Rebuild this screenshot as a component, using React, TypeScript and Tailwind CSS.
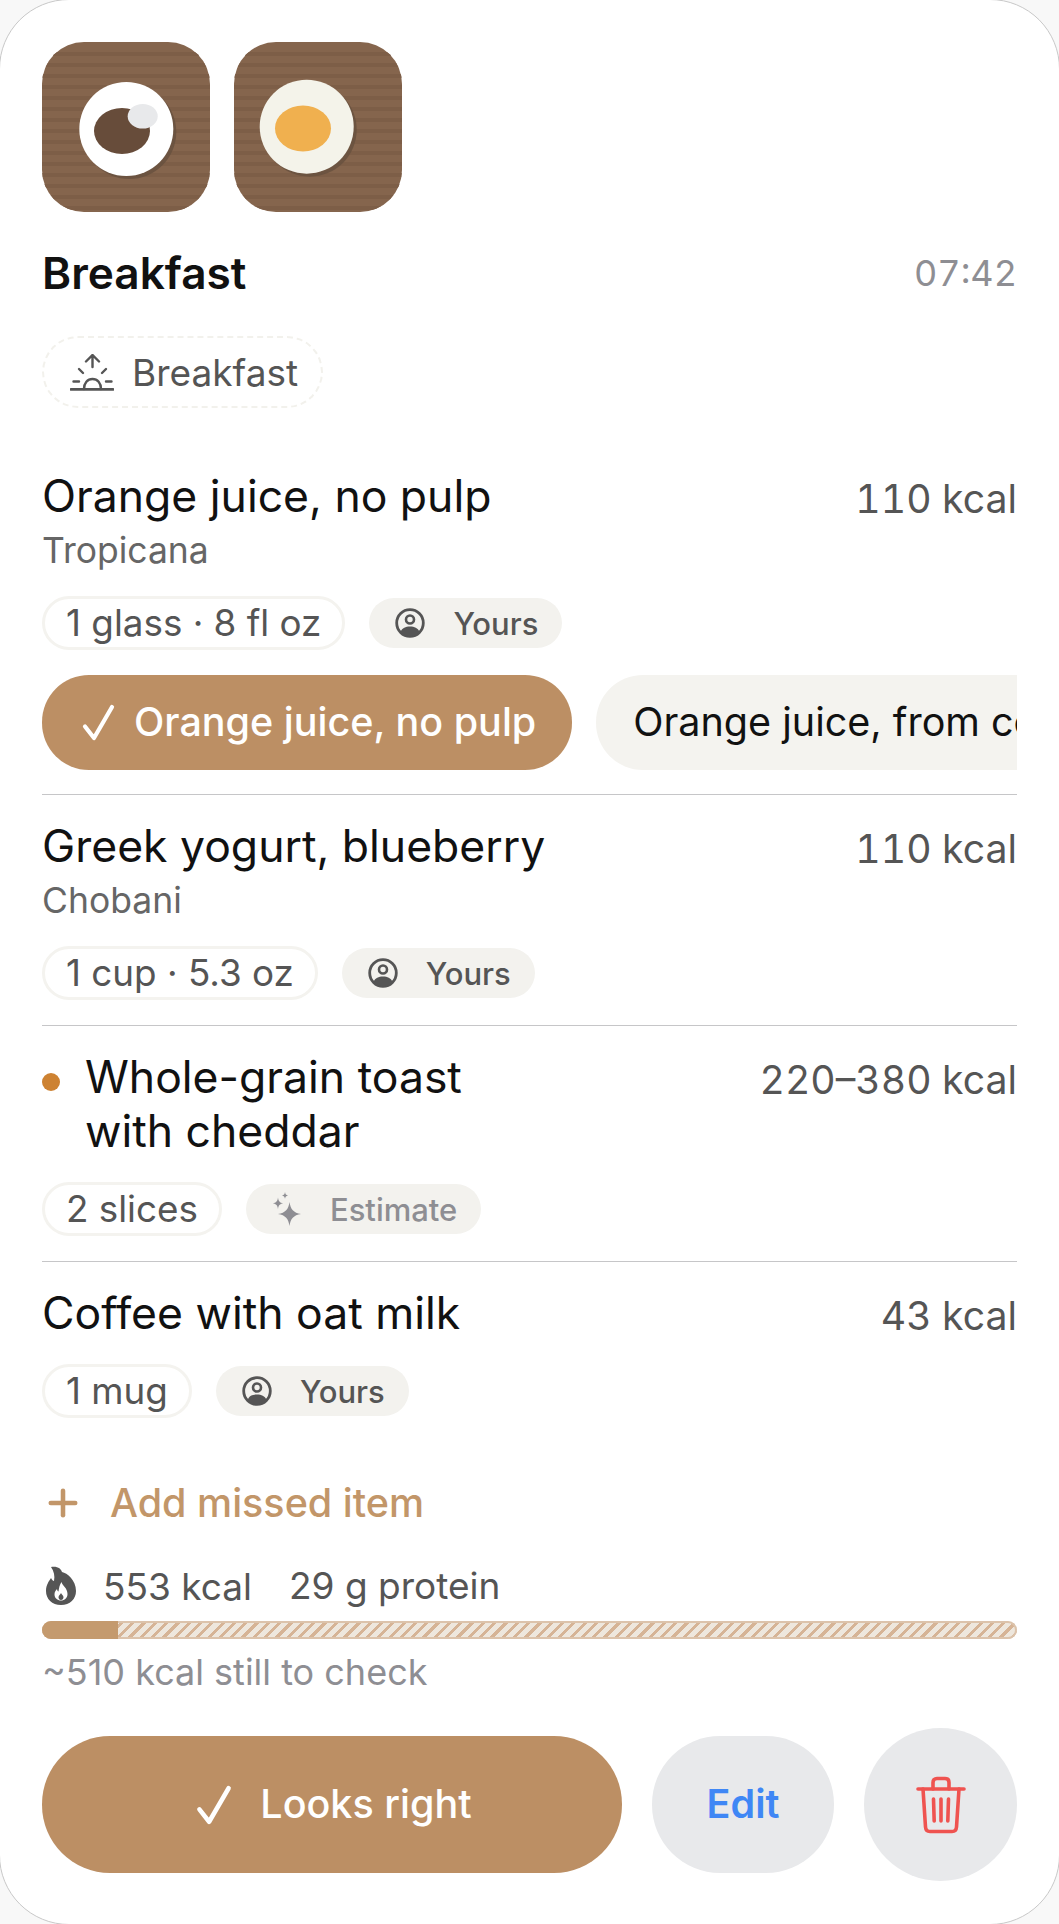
import React from "react";
import { Plus } from "lucide-react";

function Thumb({ kind }: { kind: "milk" | "egg" }) {
  const cx = kind === "milk" ? 84.3 : 72.7;
  const cy = kind === "milk" ? 87 : 84.7;
  const rows = Array.from({ length: 15 }, (_, i) => i);
  return (
    <svg width="168" height="170" viewBox="0 0 168 170" className="block shrink-0">
      <defs>
        <clipPath id={`c-${kind}`}>
          <rect width="168" height="170" rx="42" />
        </clipPath>
      </defs>
      <g clipPath={`url(#c-${kind})`}>
        <rect width="168" height="170" fill="#85654d" />
        {rows.map((i) => (
          <rect key={i} y={10 + i * 11} width="168" height="4" fill="#7d5e47" />
        ))}
      </g>
      <circle cx={cx + 3} cy={cy + 3} r="47" fill="#67503e" opacity="0.8" />
      {kind === "milk" ? (
        <>
          <circle cx={cx} cy={cy} r="47" fill="#ffffff" />
          <ellipse cx="80" cy="89" rx="28" ry="23" fill="#674c3a" />
          <ellipse cx="100.700" cy="74.300" rx="15" ry="12.300" fill="#e8e9eb" />
        </>
      ) : (
        <>
          <circle cx={cx} cy={cy} r="47" fill="#f4f3ea" />
          <ellipse cx="69" cy="86.400" rx="28" ry="23" fill="#f0b04f" />
        </>
      )}
    </svg>
  );
}

function SunriseIcon() {
  return (
    <svg width="44" height="37" viewBox="0 0 44 37" fill="none" stroke="#555555" strokeWidth="2.400" strokeLinecap="round" className="shrink-0">
      <path d="M22.500 13V1.500M16 7.500l6.500-6.500L29 7.500" />
      <path d="M9 15l4 4M36 15l-4 4M3.500 27.500H9M36 27.500h5.500" />
      <path d="M14 35c0-6 3.500-10 8.500-10S31 29 31 35" />
      <path d="M1 35.300h42" strokeWidth="2.800" />
    </svg>
  );
}

function UserIcon() {
  return (
    <svg width="30" height="32" viewBox="0 0 30 32" fill="none" className="shrink-0">
      <circle cx="15" cy="16" r="13.300" stroke="#555555" strokeWidth="2.800" />
      <circle cx="15" cy="12.500" r="4" stroke="#555555" strokeWidth="2.600" />
      <path d="M5.500 25c1.700-4.200 5.100-5.500 9.500-5.500s7.800 1.300 9.500 5.500c-2.500 2.900-5.600 4.200-9.500 4.200S8 27.900 5.500 25Z" fill="#555555" />
    </svg>
  );
}

function SparkleIcon() {
  return (
    <svg width="30" height="34" viewBox="0 0 30 34" fill="#8e8e93" className="shrink-0">
      <path d="M17.500 10c1 7.500 4 10.700 11.500 12-7.500 1.300-10.500 4.500-11.500 12-1-7.500-4-10.700-11.500-12 7.500-1.300 10.500-4.500 11.500-12Z" />
      <path d="M6 5.500c.5 3.800 1.700 5.100 5.200 5.800-3.500.7-4.700 2-5.200 6-.5-4-1.700-5.300-5.200-6 3.500-.7 4.700-2 5.200-5.800Z" />
      <path d="M13 0c.4 2.300 1 3 3 3.400-2 .4-2.600 1.100-3 3.400-.4-2.300-1-3-3-3.400 2-.4 2.600-1.100 3-3.400Z" />
    </svg>
  );
}

function Check({ w, h }: { w: number; h: number }) {
  return (
    <svg width={w} height={h} viewBox="0 0 33 37" fill="none" className="shrink-0">
      <path d="M3 22.500 12 34 30 3" stroke="#ffffff" strokeWidth="4.200" strokeLinecap="round" strokeLinejoin="round" />
    </svg>
  );
}

function FlameIcon() {
  return (
    <svg width="32" height="40" viewBox="0 0 32 40" className="ml-[3px] shrink-0">
      <path
        fill="#555555"
        d="M6 1c7-1 10 2 11 5 5 1 14 8 14 19 0 8-6 14-15 14S1 33 1 25c0-6 3-10 5-13 1 2 2 3 3 3 1-5 0-10-3-14Z"
      />
      <path
        fill="#ffffff"
        d="M16.500 16c1 4 6 6 6 12 0 4-3 6.500-6.500 6.500S9.500 32 9.500 28.500c0-2.500 1-4 2.500-5.500.2 1.500.8 2.200 1.500 2.500.5-3.500 1-6.500 3-9.500Z"
      />
      <path fill="#555555" d="M16 27c.5 1.500 2.500 2.500 2.500 4.300 0 1.500-1.100 2.700-2.500 2.700s-2.500-1.200-2.500-2.700c0-1.800 2-2.800 2.500-4.300Z" />
    </svg>
  );
}

function TrashIcon() {
  return (
    <svg width="50" height="58" viewBox="0 0 50 58" fill="none" stroke="#ef5350" strokeWidth="3.600" strokeLinecap="round" strokeLinejoin="round">
      <path d="M2 13h46" />
      <path d="M17 13V6.500C17 4 18.500 2.500 21 2.500h8c2.500 0 4 1.500 4 4V13" />
      <path d="M7 13l2.500 38c.2 3 2 4.500 4.500 4.500h22c2.500 0 4.300-1.500 4.500-4.500L43 13" />
      <path d="M17.500 23l.7 22M25 23v22M32.500 23l-.7 22" />
    </svg>
  );
}

function ServingChip({ children }: { children: React.ReactNode }) {
  return (
    <div className="flex h-[54px] items-center rounded-full border-[3px] border-[#f4f3ef] px-[21px] text-[36.800px] leading-none text-[#555555]">
      {children}
    </div>
  );
}

function SourceChip({ estimate }: { estimate?: boolean }) {
  return (
    <div
      className={`flex h-[50px] items-center gap-[28px] rounded-full bg-[#f3f2ee] pl-[26px] pr-[24px] text-[31px] font-medium leading-none ${
        estimate ? "text-[#8e8e93]" : "text-[#555555]"
      }`}
    >
      {estimate ? <SparkleIcon /> : <UserIcon />}
      <span>{estimate ? "Estimate" : "Yours"}</span>
    </div>
  );
}

function ItemHead({ name, kcal, dot }: { name: React.ReactNode; kcal: string; dot?: boolean }) {
  return (
    <div className="flex items-start justify-between">
      <div className="flex items-start">
        {dot && <span className="mr-[25px] mt-[22px] h-[18px] w-[18px] rounded-full bg-[#cd8232]" />}
        <div className="-mt-[1px] text-[44.500px] leading-[54px] text-[#111111]">{name}</div>
      </div>
      <div className="pt-[2px] text-[39.200px] leading-[54px] tabular-nums text-[#555555]">{kcal}</div>
    </div>
  );
}

function Divider() {
  return <div className="h-[1px] bg-[#c6c6c8]" />;
}

export default function App() {
  return (
    <div className="h-[1924px] w-[1059px] overflow-hidden bg-[#f8f8f8] font-['Inter',sans-serif]">
      <div className="-m-px h-[1926px] w-[1061px] rounded-[70px] border border-[#c8c8c8] bg-white px-[42px] pt-[42px]">
        <div className="flex gap-[24px]">
          <Thumb kind="milk" />
          <Thumb kind="egg" />
        </div>

        <div className="mt-[36px] flex items-center justify-between">
          <div className="text-[44.200px] font-semibold leading-[50px] text-[#111111]">Breakfast</div>
          <div className="text-[36px] leading-[50px] tabular-nums text-[#8e8e93]">07:42</div>
        </div>

        <div className="mt-[38px] flex h-[72px] w-[281px] items-center gap-[18px] rounded-full border-[2.500px] border-dashed border-[#f2f1ec] pl-[26px] text-[37px] leading-none text-[#555555]">
          <SunriseIcon />
          <span>Breakfast</span>
        </div>

        <div className="mt-[62px]">
          <ItemHead name="Orange juice, no pulp" kcal="110 kcal" />
          <div className="mt-[1px] text-[35.500px] leading-[48px] text-[#666666]">Tropicana</div>
          <div className="mt-[21px] flex items-center gap-[24px]">
            <ServingChip>1 glass · 8 fl oz</ServingChip>
            <SourceChip />
          </div>
          <div className="mt-[25px] flex gap-[24px] overflow-hidden">
            <div className="flex h-[95px] shrink-0 items-center gap-[19px] rounded-[47px] bg-[#bc8f64] pl-[40px] pr-[36px] text-[39.500px] font-medium leading-none text-white">
              <Check w={33} h={37} />
              <span>Orange juice, no pulp</span>
            </div>
            <div className="flex h-[95px] shrink-0 items-center rounded-[47px] bg-[#f4f3ef] px-[37px] text-[39.500px] leading-none text-[#111111]">
              Orange juice, from concentrate
            </div>
          </div>
        </div>

        <div className="mt-[24px]">
          <Divider />
        </div>

        <div className="mt-[25px]">
          <ItemHead name="Greek yogurt, blueberry" kcal="110 kcal" />
          <div className="mt-[1px] text-[35.500px] leading-[48px] text-[#666666]">Chobani</div>
          <div className="mt-[21px] flex items-center gap-[24px]">
            <ServingChip>1 cup · 5.3 oz</ServingChip>
            <SourceChip />
          </div>
        </div>

        <div className="mt-[25px]">
          <Divider />
        </div>

        <div className="mt-[25px]">
          <ItemHead
            dot
            name={
              <>
                Whole-grain toast
                <br />
                with cheddar
              </>
            }
            kcal="220–380 kcal"
          />
          <div className="mt-[24px] flex items-center gap-[24px]">
            <ServingChip>2 slices</ServingChip>
            <SourceChip estimate />
          </div>
        </div>

        <div className="mt-[25px]">
          <Divider />
        </div>

        <div className="mt-[25px]">
          <ItemHead name="Coffee with oat milk" kcal="43 kcal" />
          <div className="mt-[21px] flex items-center gap-[24px]">
            <ServingChip>1 mug</ServingChip>
            <SourceChip />
          </div>
        </div>

        <div className="mt-[60px] flex items-center gap-[26px] text-[39.500px] font-medium leading-[50px] text-[#c29669]">
          <Plus size={42} strokeWidth={2.600} color="#c29669" />
          <span>Add missed item</span>
        </div>

        <div className="mt-[36px] flex items-center text-[37px] leading-[42px] text-[#555555]">
          <FlameIcon />
          <span className="ml-[26px] mt-[2px]">553 kcal</span>
          <span className="ml-[37px]">29 g protein</span>
        </div>

        <div className="mt-[13px] flex h-[18px] overflow-hidden rounded-full bg-[repeating-linear-gradient(135deg,#d6b496_0px,#d6b496_3px,#eee7dd_3px,#eee7dd_8px)] shadow-[inset_0_0_0_2px_#dcc3ab]">
          <div className="w-[76px] bg-[#c49a6e]" />
        </div>

        <div className="mt-[12px] text-[36px] leading-[42px] text-[#8e8e93]">~510 kcal still to check</div>

        <div className="mt-[35px] flex items-center">
          <div className="flex h-[137px] w-[580px] items-center justify-center gap-[28px] rounded-[68px] bg-[#bc8f64] pl-[4px] text-[39.500px] font-medium leading-none text-white">
            <Check w={36} h={40} />
            <span>Looks right</span>
          </div>
          <div className="ml-[30px] flex h-[137px] w-[182px] items-center justify-center rounded-[68px] bg-[#e8e9eb] text-[39.500px] font-semibold leading-none text-[#3f87f5]">
            Edit
          </div>
          <div className="ml-[30px] flex h-[153px] w-[153px] items-center justify-center rounded-full bg-[#e8e9eb]">
            <TrashIcon />
          </div>
        </div>
      </div>
    </div>
  );
}
